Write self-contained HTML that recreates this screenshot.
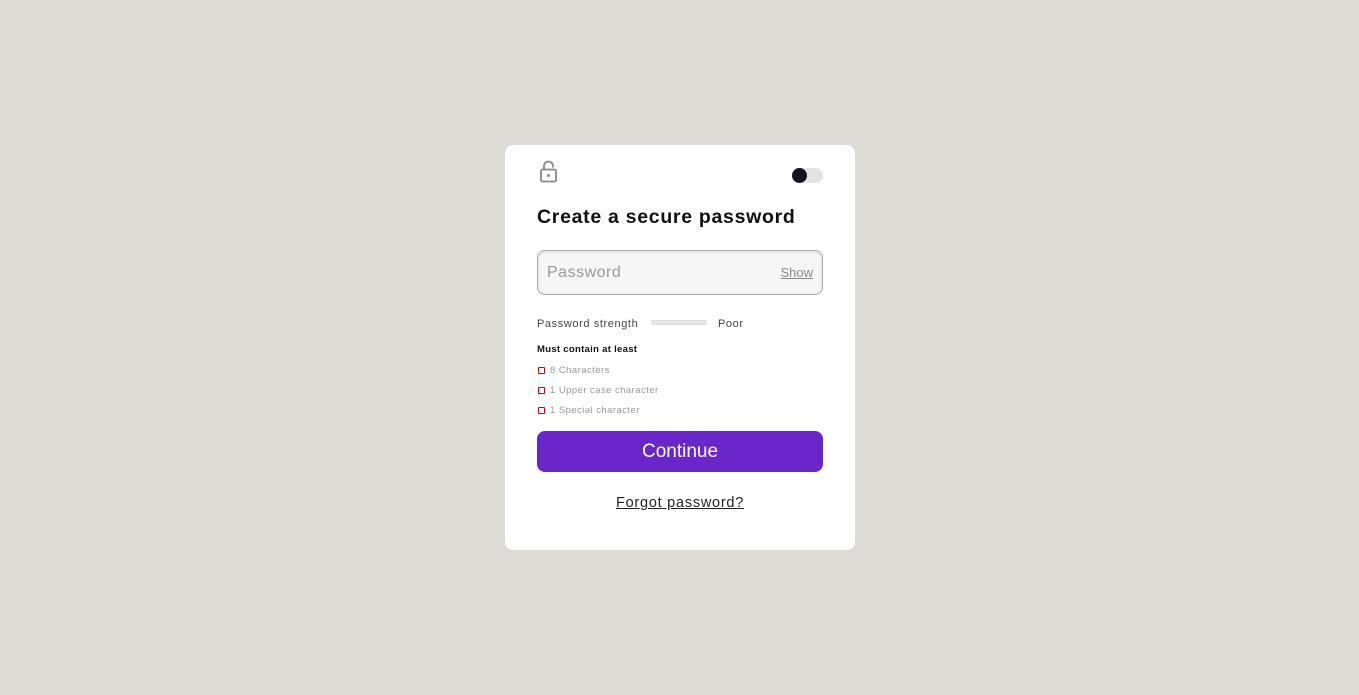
<!DOCTYPE html>
<html><head><meta charset="utf-8"><style>
*{margin:0;padding:0;box-sizing:border-box}
body{width:1359px;height:695px;background:#dedad6;font-family:"Liberation Sans",sans-serif;position:relative;overflow:hidden}
.card{position:absolute;left:505px;top:145px;width:350px;height:405px;background:#fff;border-radius:8px}
.a{position:absolute;white-space:nowrap}
h1{position:absolute;left:32px;top:61px;font-size:19.5px;font-weight:bold;color:#111;letter-spacing:0.7px;white-space:nowrap}
.inp{position:absolute;left:32px;top:105px;width:286px;height:45px;border:1px solid #aaa;border-radius:8px;background:#f6f6f6;box-shadow:inset 0 1px 3px rgba(0,0,0,.12)}
.sm{font-size:11px;color:#444;letter-spacing:0.6px}
.req{font-size:9.5px;color:#999;position:absolute;left:45px;letter-spacing:0.45px}
.box{position:absolute;left:33px;width:7px;height:7px;border:1.3px solid #c00;border-radius:1px}
.btn{position:absolute;left:32px;top:286px;width:286px;height:41px;background:#6a26cb;border-radius:8px;color:#fff;font-size:19px;text-align:center;line-height:41px}
</style></head><body>
<div class="card">
<svg class="a" style="left:34px;top:15px" width="20" height="24" viewBox="0 0 20 24"><rect x="2" y="9.5" width="15" height="12" rx="1.5" fill="none" stroke="#888" stroke-width="1.8"/><path d="M5 9.5V6a4.5 4.5 0 0 1 9 0v1.5" fill="none" stroke="#888" stroke-width="1.8"/><circle cx="9.5" cy="15.5" r="1.5" fill="#888"/></svg>
<div class="a" style="left:287px;top:23px;width:31px;height:15px;border-radius:8px;background:#e4e2e2"></div>
<div class="a" style="left:287px;top:23px;width:15px;height:15px;border-radius:50%;background:#15121e"></div>
<h1>Create a secure password</h1>
<div class="inp"><span class="a" style="left:9px;top:13px;font-size:16px;color:#999;letter-spacing:0.5px">Password</span><span class="a" style="right:9px;top:14px;font-size:13px;color:#888;text-decoration:underline">Show</span></div>
<span class="a sm" style="left:32px;top:173px">Password strength</span>
<div class="a" style="left:146px;top:175px;width:56px;height:5px;border-radius:3px;background:#e6e6e6;border:1px solid #ddd"></div>
<span class="a sm" style="left:213px;top:173px">Poor</span>
<span class="a" style="left:32px;top:199px;font-size:9.5px;font-weight:bold;color:#111;letter-spacing:0.3px">Must contain at least</span>
<div class="box" style="top:222px"></div><span class="req" style="top:220px">8 Characters</span>
<div class="box" style="top:242px"></div><span class="req" style="top:240px">1 Upper case character</span>
<div class="box" style="top:262px"></div><span class="req" style="top:260px">1 Special character</span>
<div class="btn">Continue</div>
<span class="a" style="left:111px;top:350px;font-size:14.5px;color:#222;text-decoration:underline;letter-spacing:0.75px">Forgot password?</span>
</div>
</body></html>
